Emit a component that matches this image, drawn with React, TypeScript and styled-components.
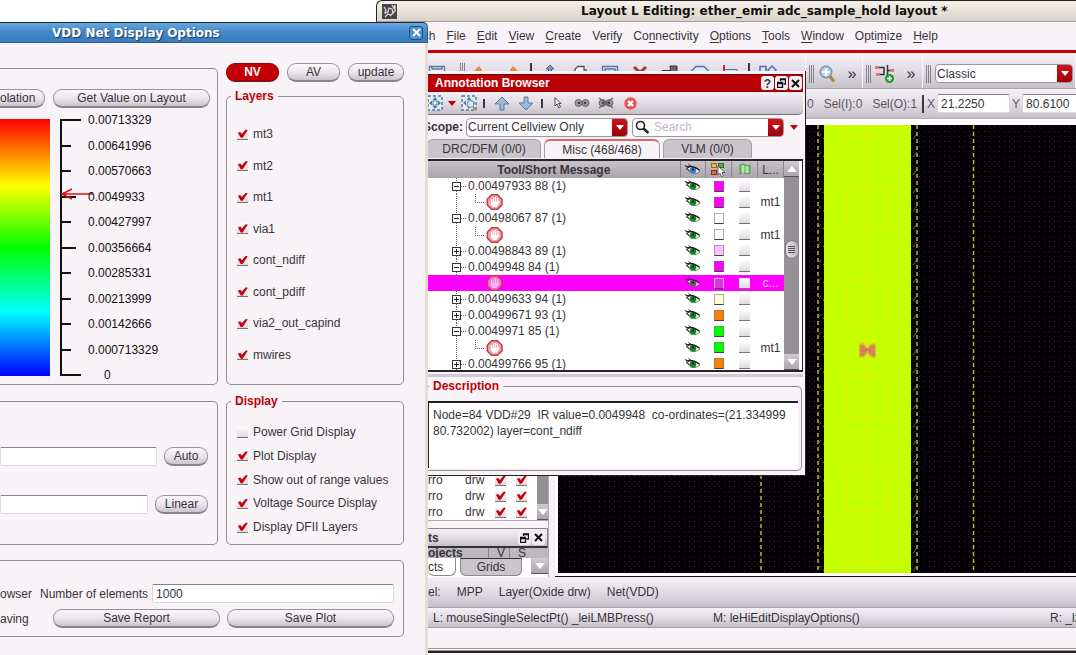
import React from "react";
import styled, { createGlobalStyle, css } from "styled-components";

const GlobalStyle = createGlobalStyle`
  * { box-sizing: border-box; }
  html, body { margin: 0; padding: 0; background: #fff; }
  body, button, input, select, textarea, table, legend {
    font-family: "Liberation Sans", Arial, sans-serif;
    font-size: 12px;
    line-height: 16px;
    color: #37343a;
  }
  button { padding: 0; cursor: default; }
`;

const panel = "#f7f3f7";
const red = "#c00008";
const metal = "linear-gradient(#f5f0f6 0%, #e2dde4 50%, #c6c1c8 100%)";

/* ---------- shared controls ---------- */

const Desktop = styled.main`
  position: relative;
  height: 100vh;
  overflow: hidden;
  background: #fff;
`;

const Pill = styled.button<{ $w?: number; $on?: boolean; $cut?: boolean }>`
  width: ${(p) => (p.$w ? `${p.$w}px` : "auto")};
  height: 19px;
  flex: ${(p) => (p.$w ? "none" : "1")};
  border: 1px solid #98949a;
  border-bottom: 2px solid #868288;
  border-radius: 9px;
  line-height: 15px;
  white-space: nowrap;
  background: linear-gradient(#fbf8fb 0%, #ebe6ed 50%, #cbc6cd 100%);
  ${(p) =>
    p.$on &&
    css`
      background: #c40006;
      border-color: #8e0a10;
      color: #fff;
      font-weight: bold;
    `}
  ${(p) =>
    p.$cut &&
    css`
      border-left: 0;
      border-top-left-radius: 0;
      border-bottom-left-radius: 0;
      text-align: left;
    `}
`;

const TextBox = styled.input<{ $w?: number }>`
  width: ${(p) => (p.$w ? `${p.$w}px` : "auto")};
  flex: ${(p) => (p.$w ? "none" : "1")};
  min-width: 0;
  height: 19px;
  padding: 0 3px;
  border: 1px solid #dcd8dd;
  border-top-color: #858187;
  border-radius: 2px;
  background: #fff;
  outline: none;
`;

const Check = styled.input.attrs({ type: "checkbox" })`
  appearance: none;
  flex: none;
  width: 11px;
  height: 11px;
  margin: 0;
  background: linear-gradient(#fdfbfd, #e0dbe2);
  border-bottom: 1px solid #77737a;
  &:checked::before {
    content: "";
    display: block;
    width: 11px;
    height: 10px;
    background: #c8000c;
    clip-path: polygon(8% 42%, 30% 34%, 44% 54%, 80% 10%, 98% 14%, 52% 92%, 34% 92%);
  }
`;

const Group = styled.fieldset`
  margin: 0;
  min-width: 0;
  border: 1px solid #8f8b91;
  border-radius: 5px;
`;

const Legend = styled.legend`
  margin-left: 4px;
  padding: 0 4px;
  font-weight: bold;
  color: ${red};
`;

/* ---------- option dialog ---------- */

const Dialog = styled.section`
  position: absolute;
  left: 0;
  top: 22px;
  bottom: 0;
  width: 428px;
  display: flex;
  flex-direction: column;
  background: ${panel};
`;

const DialogTitle = styled.header`
  display: flex;
  align-items: center;
  justify-content: space-between;
  height: 21px;
  padding: 0 4px 0 52px;
  border-top: 1px solid #12304e;
  border-bottom: 1px solid #2c5d8d;
  border-right: 1px solid #2c5d8d;
  border-top-right-radius: 5px;
  background: linear-gradient(#6ba5dc, #4389cb 45%, #3a7cbc);
`;

const DialogName = styled.h1`
  margin: 0;
  font: bold 12px/18px "DejaVu Sans", sans-serif;
  color: #fff;
  text-shadow: 1px 1px 1px #1d3d5e;
`;

const CloseBox = styled.button`
  display: grid;
  place-items: center;
  width: 14px;
  height: 14px;
  border: 1px solid #1f5080;
  border-radius: 3px;
  background: #4e90cf;
`;

const DialogBody = styled.div`
  flex: 1;
  display: flex;
  flex-direction: column;
  padding-right: 21px;
  border-right: 3px solid #e4ddd2;
`;

const Columns = styled.div<{ $h: number }>`
  display: grid;
  grid-template-columns: 218px 1fr;
  gap: 8px;
  height: ${(p) => p.$h}px;
`;

const OpenPanel = styled.div<{ $top?: number }>`
  display: flex;
  flex-direction: column;
  min-width: 0;
  margin-top: ${(p) => p.$top ?? 0}px;
  border: 1px solid #8f8b91;
  border-left: 0;
  border-radius: 0 5px 5px 0;
`;

const RightColumn = styled.div`
  display: flex;
  flex-direction: column;
  gap: 6px;
  padding-top: 20px;
  > fieldset { flex: 1; }
`;

const ButtonRow = styled.div`
  display: flex;
  gap: 8px;
`;

const ScaleButtons = styled(ButtonRow)`
  padding: 20px 7px 0 0;
`;

const Scale = styled.div`
  display: flex;
  align-items: flex-start;
  padding-top: 4px;
`;

const Ramp = styled.div`
  width: 50px;
  height: 257px;
  margin: 7px 10px 0 0;
  background: linear-gradient(#f00 0%, #ff0 26%, #0f0 50%, #0ff 75%, #00f 100%);
`;

const Ruler = styled.svg`
  margin-top: 7px;
`;

const ScaleLabels = styled.ol`
  display: flex;
  flex-direction: column;
  justify-content: space-between;
  height: 271px;
  margin: 0 0 0 -6px;
  padding: 0;
  list-style: none;
  color: #111;
  li:last-child { padding-left: 16px; }
`;

const CheckList = styled.div<{ $pt: number; $pb: number }>`
  display: flex;
  flex-direction: column;
  justify-content: space-between;
  height: 100%;
  padding: ${(p) => p.$pt}px 0 ${(p) => p.$pb}px 10px;
`;

const FullGroup = styled(Group)`
  padding: 0;
`;

const OptionGroup = styled(FullGroup)`
  margin-top: 8px;
`;

const CheckLabel = styled.label`
  display: flex;
  align-items: center;
  gap: 5px;
  white-space: nowrap;
`;

const RangeRows = styled.div`
  display: flex;
  flex-direction: column;
  gap: 29px;
  padding: 45px 9px 0 0;
`;

const RangeRow = styled.div`
  display: flex;
  gap: 7px;
`;

const SavePanel = styled(OpenPanel)`
  gap: 6px;
  height: 77px;
  padding: 23px 9px 0 0;
`;

const SaveRow = styled.div<{ $gap: number }>`
  display: flex;
  align-items: center;
  gap: ${(p) => p.$gap}px;
`;

const LeftWord = styled.span<{ $w: number }>`
  width: ${(p) => p.$w}px;
  flex: none;
`;

/* ---------- layout editor window ---------- */

const Editor = styled.section`
  display: flex;
  flex-direction: column;
  height: calc(100vh - 2px);
  margin-left: 376px;
  overflow: hidden;
  background: ${panel};
  border-bottom: 2px solid #222;
`;

const EditorTitle = styled.header`
  flex: none;
  display: flex;
  align-items: center;
  gap: 184px;
  height: 22px;
  padding-left: 5px;
  border-top: 1px solid #222;
  border-left: 1px solid #222;
  border-bottom: 1px solid #a39d93;
  border-top-left-radius: 6px;
  background: linear-gradient(#f5f1ea, #d9d3c8);
`;

const EditorName = styled.h1`
  margin: 0;
  font: bold 12px/18px "DejaVu Sans", sans-serif;
  color: #111;
  white-space: nowrap;
`;

const MenuBar = styled.nav`
  flex: none;
  display: flex;
  gap: 11px;
  height: 31px;
  padding: 5px 0 0 20px;
  border-bottom: 3px solid #c80009;
`;

const MenuItem = styled.button`
  height: 18px;
  border: 0;
  background: none;
  u { text-underline-offset: 2px; }
`;

const ToolBar = styled.div`
  flex: none;
  display: flex;
  height: 36px;
  border-bottom: 1px solid #a9a4ab;
`;

const ToolGroup = styled.div<{ $w?: number }>`
  display: flex;
  align-items: center;
  flex: ${(p) => (p.$w ? "none" : "1")};
  width: ${(p) => (p.$w ? `${p.$w}px` : "auto")};
  padding: 6px 0 0 3px;
  gap: 4px;
  border-right: 1px solid #f8f6f9;
  background: ${metal};
`;

const IconStrip = styled(ToolGroup)`
  align-items: flex-start;
  padding: 10px 0 0 46px;
  gap: 0;
`;

const ToolButton = styled.button<{ $w: number }>`
  display: grid;
  place-items: center;
  flex: none;
  width: ${(p) => p.$w}px;
  height: 20px;
  border: 0;
  background: none;
`;

const MoreButton = styled(ToolButton)`
  font-size: 16px;
`;

const Grip = styled.span`
  flex: none;
  width: 5px;
  height: 18px;
  border: solid #858187;
  border-width: 0 1px;
  background: linear-gradient(90deg, transparent 1px, #858187 1px 2px, transparent 2px);
`;

const StripGrip = styled(Grip)`
  margin: 0 2px 0 8px;
`;

const Divider = styled.span<{ $h: number }>`
  flex: none;
  width: 2px;
  height: ${(p) => p.$h}px;
  margin: 0 3px;
  background: #3b383d;
`;

const ToolDivider = styled(Divider)`
  margin: 0 5px;
`;

const Combo = styled.span<{ $w: number }>`
  display: flex;
  flex: none;
  width: ${(p) => p.$w}px;
  height: 19px;
  border: 1px solid #9b979d;
  border-radius: 4px;
  background: #fff;
  overflow: hidden;
`;

const Select = styled.select`
  appearance: none;
  flex: 1;
  min-width: 0;
  padding: 0 0 0 1px;
  border: 0;
  background: transparent;
`;

const Drop = styled.span`
  display: grid;
  place-items: center;
  flex: none;
  width: 15px;
  background: linear-gradient(#d0121a, #9c0007);
`;

const CoordBar = styled.div`
  flex: none;
  display: flex;
  align-items: center;
  height: 30px;
  padding-left: 431px;
  border-bottom: 1px solid #b5b0b7;
  background: ${metal};
  white-space: nowrap;
`;

const CoordTexts = styled.div`
  display: flex;
  flex: none;
  gap: 10px;
  margin-right: 2px;
  color: #5a565c;
`;

const CoordLabel = styled.label`
  display: flex;
  align-items: center;
  gap: 2px;
  flex: none;
  margin-right: 2px;
  color: #5a565c;
`;

const Work = styled.div`
  flex: 1;
  display: flex;
  min-height: 0;
  background: ${panel};
`;

const Dock = styled.aside`
  display: flex;
  flex-direction: column;
  justify-content: flex-end;
  flex: none;
  width: 173px;
  padding-left: 52px;
  border-right: 1px solid #b0abb2;
  overflow: hidden;
`;

const CanvasFrame = styled.div`
  flex: 1;
  min-width: 0;
  margin-left: 6px;
  padding: 6px 0 3px 3px;
  background: #fff;
  border-bottom: 1px solid #111;
`;

const LayerPane = styled.div`
  display: flex;
  background: #fff;
  border-bottom: 1px solid #b0abb2;
`;

const LayerTable = styled.table`
  width: 103px;
  height: 48px;
  table-layout: fixed;
  border-collapse: collapse;
  td { height: 16px; padding: 0; line-height: 16px; }
  td:nth-child(1) { width: 37px; }
  td:nth-child(2) { width: 30px; }
  td:nth-child(n + 3) { width: 21px; }
  input { display: block; }
`;

const ScrollTrack = styled.div<{ $w: number }>`
  display: flex;
  flex-direction: column;
  justify-content: space-between;
  align-items: center;
  width: ${(p) => p.$w}px;
  background: #949196;
`;

const ScrollButton = styled.button`
  display: grid;
  place-items: center;
  width: 100%;
  height: 16px;
  border: 0;
  border-bottom: 1px solid #55525a;
  background: linear-gradient(#cfcbd1, #aaa6ac);
`;

const Thumb = styled.span`
  display: grid;
  place-items: center;
  width: 14px;
  height: 19px;
  border: 1px solid #77747a;
  border-radius: 7px;
  background: linear-gradient(90deg, #e3e0e4, #b9b5bb);
`;

const ObjectsTitle = styled.div`
  display: flex;
  align-items: center;
  gap: 1px;
  height: 20px;
  margin-top: 7px;
  padding-right: 2px;
  border: solid #8b878d;
  border-width: 1px 1px 0 0;
  border-bottom: 2px solid #333;
  background: ${metal};
  font-weight: bold;
`;

const Grow = styled.span<{ $n?: number }>`
  flex: ${(p) => p.$n ?? 1};
`;

const SmallBox = styled.button`
  display: grid;
  place-items: center;
  width: 13px;
  height: 14px;
  border: 0;
  border-radius: 3px;
  background: #f1edf2;
`;

const ObjectsHead = styled.div`
  display: grid;
  grid-template-columns: 60px 21px 22px 16px;
  height: 10px;
  background: #bcb8be;
  line-height: 10px;
  span { padding-left: 8px; border-left: 1px solid #88848a; }
`;

const DockTabs = styled.div`
  display: flex;
  align-items: flex-start;
  height: 19px;
  background: #fff;
`;

const DockTab = styled.button<{ $w: number; $on?: boolean }>`
  width: ${(p) => p.$w}px;
  height: 18px;
  margin-right: 4px;
  border: 1px solid #8b878d;
  border-top: ${(p) => (p.$on ? "0" : "1px solid #333")};
  border-left: ${(p) => (p.$on ? "0" : "1px solid #8b878d")};
  border-radius: 0 0 6px 6px;
  text-align: ${(p) => (p.$on ? "left" : "center")};
  background: ${(p) => (p.$on ? "#fff" : "#c9c5cb")};
`;

const CursorBar = styled.div`
  flex: none;
  display: flex;
  align-items: center;
  gap: 16px;
  height: 31px;
  padding-left: 52px;
  background: ${metal};
  border-bottom: 1px solid #a39ea5;
  white-space: nowrap;
`;

const MouseBar = styled.div`
  flex: none;
  display: grid;
  grid-template-columns: 280px 337px 1fr;
  height: 20px;
  padding: 2px 0 0 57px;
  background: ${metal};
  border-bottom: 1px solid #a39ea5;
  white-space: nowrap;
`;

const Prompt = styled.div`
  flex: none;
  height: 23px;
  border-bottom: 3px double #9c9890;
`;

/* ---------- annotation browser window ---------- */

const Browser = styled.section`
  position: absolute;
  left: 418px;
  top: 71px;
  width: 388px;
  display: flex;
  flex-direction: column;
  padding: 3px 2px 4px 0;
  background: ${panel};
  border-right: 1px solid #222;
  border-bottom: 1px solid #222;
`;

const BrowserTitle = styled.header`
  display: flex;
  align-items: center;
  gap: 1px;
  height: 18px;
  padding: 0 1px 0 17px;
  background: #bd0005;
  border-top: 1px solid #6e0508;
  border-bottom: 1px solid #8a0509;
  font-weight: bold;
  color: #fff;
`;

const BrowserTools = styled.div`
  display: flex;
  align-items: center;
  height: 23px;
  padding-left: 8px;
  border-bottom: 1px solid #77737a;
  border-radius: 0 0 5px 0;
  background: ${metal};
`;

const ScopeRow = styled.div`
  display: flex;
  align-items: center;
  height: 24px;
  gap: 4px;
  padding: 0 0 0 5px;
`;

const ScopeLabel = styled.label`
  width: 39px;
  text-align: right;
  font-weight: bold;
`;

const SearchBox = styled(Combo)`
  align-items: center;
  padding-left: 2px;
`;

const SearchInput = styled.input`
  flex: 1;
  min-width: 0;
  padding: 0 0 0 4px;
  border: 0;
  outline: none;
  &::placeholder { color: #bdb9bf; opacity: 1; }
`;

const SearchDrop = styled(Drop)`
  align-self: stretch;
`;

const Tabs = styled.div`
  display: flex;
  gap: 3px;
  height: 20px;
  padding-left: 9px;
`;

const Tab = styled.button<{ $w: number; $on?: boolean }>`
  width: ${(p) => p.$w}px;
  height: 19px;
  border: 1px solid #a39fa5;
  border-top: ${(p) => (p.$on ? "2px solid #e0666c" : "1px solid #a39fa5")};
  border-bottom: 0;
  border-radius: 6px 6px 0 0;
  background: ${(p) => (p.$on ? panel : "#c9c5ca")};
`;

const TableFrame = styled.div`
  display: flex;
  height: 213px;
  overflow: hidden;
  padding-right: 3px;
  border: 2px solid #262428;
  border-left: 0;
  border-right-width: 1px;
  background: #fff;
`;

const Messages = styled.table`
  flex: 1;
  min-width: 0;
  height: 211px;
  table-layout: fixed;
  border-collapse: collapse;
  align-self: flex-start;
  th {
    height: 17px;
    padding: 0;
    font-weight: bold;
    line-height: 16px;
    background: linear-gradient(#c6c2c8, #a8a4aa);
    border-right: 1px solid #8c888e;
  }
  th:last-child { font-weight: normal; }
  th:nth-child(1) { width: 264px; padding-left: 10px; }
  th:nth-child(n + 2) { width: 26px; }
  th svg { display: block; margin: 0 auto; }
  td { height: 16px; padding: 0; line-height: 16px; white-space: nowrap; text-align: center; }
  td:first-child { padding-left: 10px; text-align: left; }
  td input, td i { margin: 0 auto; display: block; }
`;

const Row = styled.tr<{ $sel?: boolean }>`
  background: ${(p) => (p.$sel ? "#f0f" : "#fff")};
  color: ${(p) => (p.$sel ? "#fbd0fb" : "inherit")};
`;

const TreeCell = styled.div`
  display: flex;
  height: 16px;
`;

const IconSlot = styled.span<{ $sel?: boolean }>`
  display: flex;
  justify-content: center;
  opacity: ${(p) => (p.$sel ? 0.7 : 1)};
`;

const Swatch = styled.i<{ $c: string; $sel?: boolean }>`
  width: 10px;
  height: 11px;
  background: ${(p) => p.$c};
  border: 1px solid ${(p) => (p.$sel ? "#f0b8f0" : "rgba(120, 110, 120, 0.55)")};
  border-bottom-color: #444;
`;

const Splitter = styled.div`
  height: 3px;
  margin: 2px 0 1px;
  background: #cfcbd1;
`;

const Description = styled(Group)`
  margin: 0 1px 0 0;
  padding: 7px 3px 2px 9px;
  border-left: 0;
`;

const DescLegend = styled(Legend)`
  margin-left: 2px;
`;

const DescText = styled.textarea`
  display: block;
  width: 100%;
  height: 67px;
  padding: 4px 4px;
  border: 0;
  border-top: 2px solid #222;
  border-left: 2px solid #222;
  background: #fff;
  resize: none;
  outline: none;
  overflow: hidden;
`;

/* ---------- drawings ---------- */

const Tri = ({ c = "#fff", s = 8, up = false }: { c?: string; s?: number; up?: boolean }) => (
  <svg width={s} height={s / 2 + 1} viewBox="0 0 8 5">
    <path d={up ? "M0 5L4 0L8 5Z" : "M0 0L4 5L8 0Z"} fill={c} />
  </svg>
);

const Cross = ({ c = "#111" }: { c?: string }) => (
  <svg width="9" height="9" viewBox="0 0 9 9">
    <path d="M1 1L8 8M8 1L1 8" stroke={c} strokeWidth="2" />
  </svg>
);

const Restore = () => (
  <svg width="9" height="10" viewBox="0 0 9 10">
    <path d="M3.500 3V1H8.500V6H6.500M3 1.500H8.500M.5 4.500H5.500V9.500H.5ZM.5 5.500H5.500" fill="none" stroke="#111" strokeWidth="1.300" />
  </svg>
);

const Eye = ({ iris = "#0a8f1c" }: { iris?: string }) => (
  <svg width="16" height="12" viewBox="0 0 16 12">
    <path d="M2 4Q8 1 15 7Q10 11.500 5 8.500Z" fill="#fff" stroke="#777" />
    <circle cx="8" cy="6.300" r="3.300" fill={iris} />
    <circle cx="8" cy="5.600" r="1.100" fill="#113" />
    <path d="M1 3Q8 .8 14.500 6" fill="none" stroke="#222" strokeWidth="1.300" />
    <path d="M0 1.500L4 3.500M1 4.500L4.500 6.500M3.500 .5L6 2.500" fill="none" stroke="#222" />
  </svg>
);

const Branch = ({ open }: { open: boolean }) => (
  <svg width="40" height="16" viewBox="0 0 40 16">
    <path d="M28.500 0V3M28.500 13V16M33 8.500H38" stroke="#666" strokeDasharray="1 1" />
    <rect x="24.500" y="4.500" width="8" height="8" fill="#fff" stroke="#333" />
    <path d={open ? "M26 8.500H31" : "M26 8.500H31M28.500 6V11"} stroke="#222" />
  </svg>
);

const Leaf = () => (
  <svg width="76" height="16" viewBox="0 0 76 16">
    <path d="M28.500 0V16M47.500 0V8M47 8.500H56" stroke="#666" strokeDasharray="1 1" />
    <path d="M63.500 .8h6l4.500 4.500v5.600L69.500 15.300h-6L59.300 11V5.300Z" fill="#eaa5a8" stroke="#c33f47" strokeWidth="1.500" />
    <path d="M63.500 5V9M65.500 3.500V9M67.500 3V9M69.500 4V9M71.300 7.500L69.500 10" stroke="#fff" strokeWidth="1.300" />
    <path d="M62.800 8H70.200V10.500L68.500 13H65L62.800 10.500Z" fill="#fff" />
  </svg>
);

const Fit = ({ lens = false }: { lens?: boolean }) => (
  <svg width="16" height="16" viewBox="0 0 16 16">
    <rect x="1" y="1" width="14" height="14" fill="#e4ecf4" stroke="#557a9e" strokeDasharray="3 2" strokeWidth="1.500" />
    <path d="M8 2l2.500 3h-5ZM8 14l2.500-3h-5ZM2 8l3-2.500v5ZM14 8l-3-2.500v5Z" fill="#4f7aa5" />
    {lens ? (
      <g>
        <path d="M12 12L15 15" stroke="#c98035" strokeWidth="2" />
        <circle cx="9.500" cy="9" r="3.500" fill="#d8e8f6" stroke="#6484a5" />
      </g>
    ) : (
      <rect x="6" y="6" width="4" height="4" fill="#fff" stroke="#4f7aa5" />
    )}
  </svg>
);

const BlueArrow = ({ down = false }: { down?: boolean }) => (
  <svg width="16" height="15" viewBox="0 0 16 15">
    <path d={down ? "M6 1h4v6h5L8 14 1 7h5Z" : "M6 14h4V8h5L8 1 1 8h5Z"} fill="#9dbbd9" stroke="#5b7b9d" />
  </svg>
);

const Glasses = ({ crossed = false }: { crossed?: boolean }) => (
  <svg width="16" height="12" viewBox="0 0 16 12">
    <circle cx="4.500" cy="6" r="3.500" fill="#999" stroke="#666" />
    <circle cx="11.500" cy="6" r="3.500" fill="#999" stroke="#666" />
    <circle cx="5" cy="6" r="1.300" fill="#444" />
    <circle cx="11" cy="6" r="1.300" fill="#444" />
    {crossed && <path d="M1 1L15 11M15 1L1 11" stroke="#666" strokeWidth="1.300" />}
  </svg>
);

const Pointer = () => (
  <svg width="8" height="12" viewBox="0 0 8 12">
    <path d="M1 .5V9L3 7L5 11L6.500 10L4.500 6.500H7Z" fill="#fff" stroke="#333" strokeWidth=".9" />
  </svg>
);

const Delete = () => (
  <svg width="15" height="15" viewBox="0 0 15 15">
    <circle cx="7.500" cy="7.500" r="6.500" fill="#e0545a" stroke="#f3b9bb" />
    <path d="M5 5L10 10M10 5L5 10" stroke="#fff" strokeWidth="2.400" />
  </svg>
);

const Lens = () => (
  <svg width="15" height="15" viewBox="0 0 15 15">
    <circle cx="5.500" cy="5.500" r="4" fill="none" stroke="#222" strokeWidth="1.600" />
    <path d="M8.500 8.500L13.500 13" stroke="#222" strokeWidth="2.400" />
  </svg>
);

const Zoom = () => (
  <svg width="17" height="18" viewBox="0 0 17 18">
    <path d="M10.500 11L15 16.500" stroke="#bd7a33" strokeWidth="3" />
    <circle cx="7" cy="7" r="5.800" fill="#b9d2ea" stroke="#7591ad" strokeWidth="1.400" />
    <path d="M7 3.500V10.500M3.500 7H10.500" stroke="#fff" strokeWidth="2.200" />
  </svg>
);

const NetAdd = () => (
  <svg width="20" height="20" viewBox="0 0 20 20">
    <path d="M1 3.500H9V10.500H3M12.500 1V11M12 6.500H18" fill="none" stroke="#333" strokeWidth="1.500" />
    <path d="M0 2h4v3H0ZM1 9h4v3H1ZM15 5h4v3h-4Z" fill="#e4767a" />
    <circle cx="14.500" cy="14.500" r="4.500" fill="#239a2e" />
    <path d="M14.500 12V17M12 14.500H17" stroke="#fff" strokeWidth="1.500" />
  </svg>
);

const AppMark = () => (
  <svg width="15" height="15" viewBox="0 0 15 15">
    <rect width="15" height="15" fill="#45454a" />
    <path d="M2 3l2 3-1 3 3-1 1-4 3 1 1 4-3 3M3 13l3-3 3 1M10 1l2 3 1-3v6l-2 2" fill="none" stroke="#dcdcdc" strokeWidth="1.300" />
  </svg>
);

const Rgb = () => (
  <svg width="17" height="15" viewBox="0 0 17 15">
    <rect x="1.500" y="1.500" width="5" height="4" fill="#f0b93a" stroke="#a2641b" />
    <rect x="8.500" y="1.500" width="5" height="4" fill="#4fb04f" stroke="#2c6b2c" />
    <rect x="1.500" y="8.500" width="5" height="4" fill="#e26a4c" stroke="#8e2b17" />
    <path d="M8 4v9l2-2 1.500 3.500 1.800-.8L12 10.500h3Z" fill="#fff" stroke="#444" strokeWidth=".8" />
  </svg>
);

const Flag = () => (
  <svg width="12" height="13" viewBox="0 0 12 13">
    <path d="M1 2Q3.500 0 6 2T11 2V10Q8.500 12 6 10T1 11Z" fill="#7fd07a" stroke="#4a8f47" />
    <path d="M4 2V10M8 3V10" stroke="#c9f0c4" strokeWidth="1.500" />
  </svg>
);

const stripIcons: Record<string, React.ReactNode> = {
  "Open": <path d="M1.500 1.500h15v12h-15ZM4 1v3h10V1" fill="#eef2f9" stroke="#5878ad" strokeWidth="1.400" />,
  "Undo": <path d="M1 6L6 1L9 5V9Z" fill="#e2883c" />,
  "Redo": <path d="M15 6L10 1L7 5V9Z" fill="#e2883c" />,
  "Move": <path d="M9 0l4 4h-2.500v3h5v3H2V7h5.500V4H5Z" fill="#7f9dbf" stroke="#49678a" />,
  "Copy": <path d="M4 14V4l3-2.500h6V5h2v8" fill="#fff" stroke="#555" strokeWidth="1.400" />,
  "Stretch": <path d="M1 1.500h16M1.500 1v5M16.500 1v5M4 4h10v8H4Z" fill="#dbe6f5" stroke="#5878ad" strokeWidth="1.400" />,
  "Delete": <path d="M3 2l12 11M15 2L3 13" stroke="#9d3d22" strokeWidth="3" />,
  "Layers": <path d="M1 5.500h8v8H1ZM9 1h7v8h-6Z" fill="#666" stroke="#333" />,
  "Rotate": <path d="M5 1.500h8l4 4v5l-4 4H5l-4-4v-5Z" fill="#dfe9f8" stroke="#4c72b8" strokeWidth="1.500" />,
  "Align": <g><path d="M3 0v14" stroke="#c92a2a" strokeWidth="2" /><path d="M4 4.500h12v4H4" fill="none" stroke="#4c72b8" /></g>,
  "Group": <path d="M1 1.500h6v6H1ZM13 1l4 4-4 4-4-4Z" fill="none" stroke="#4c72b8" strokeWidth="1.500" />,
};

const StripIcon = ({ name }: { name: string }) => (
  <ToolButton $w={30} aria-label={name}>
    <svg width="18" height="16" viewBox="0 0 18 16">{stripIcons[name]}</svg>
  </ToolButton>
);

const contactTops = [-31, 62, 156, 249, 343, 437];

const CanvasArt = styled.svg`
  display: block;
`;

const Canvas = () => (
  <CanvasArt width="100%" height="100%">
    <defs>
      <pattern id="dots" width="10" height="10" patternUnits="userSpaceOnUse">
        <rect width="10" height="10" fill="#030005" />
        <path d="M1 1h1v1h-1ZM6 1h1v1h-1ZM1 6h1v1h-1ZM6 6h1v1h-1Z" fill="#421c30" />
        <path d="M3 3h1v1h-1Z" fill="#1f1760" />
      </pattern>
      <pattern id="hatch" width="6" height="18" patternUnits="userSpaceOnUse">
        <path d="M1 14L5 9" stroke="#6e6e1c" strokeWidth="1" />
      </pattern>
      <filter id="soft"><feGaussianBlur stdDeviation="1.2" /></filter>
    </defs>
    <rect width="100%" height="100%" fill="url(#dots)" />
    <rect x="261" width="5" height="100%" fill="url(#hatch)" />
    <rect x="354" width="5" height="100%" fill="url(#hatch)" />
    <g stroke="#b9b92c" strokeWidth="1.500" strokeDasharray="4 3">
      <line x1="203" x2="203" y1="0" y2="100%" />
      <line x1="260" x2="260" y1="0" y2="100%" />
      <line x1="359" x2="359" y1="0" y2="100%" />
      <line x1="415.500" x2="415.500" y1="0" y2="100%" />
    </g>
    <rect x="266" width="87" height="100%" fill="#c6ff00" />
    <g fill="none" stroke="#f4e400" strokeDasharray="4 3">
      <line x1="309.500" x2="309.500" y1="0" y2="100%" />
      {contactTops.map((y) => (
        <rect key={y} x="288.500" y={y + 0.5} width="42" height="42" />
      ))}
    </g>
    <g filter="url(#soft)">
      <path d="M304 220L315 231M315 220L304 231M303 219V232M316 219V232M304 225.500H315" stroke="#d8755c" strokeWidth="3" />
    </g>
    <line x1="309.500" x2="309.500" y1="219" y2="231" stroke="#ffd83a" strokeDasharray="4 3" />
  </CanvasArt>
);

/* ---------- data ---------- */

const scale = ["0.00713329", "0.00641996", "0.00570663", "0.0049933", "0.00427997", "0.00356664", "0.00285331", "0.00213999", "0.00142666", "0.000713329", "0"];
const tickLengths = [20, 10, 10, 15, 10, 15, 10, 10, 10, 10, 20];

const layers = ["mt3", "mt2", "mt1", "via1", "cont_ndiff", "cont_pdiff", "via2_out_capind", "mwires"];
const display: [string, boolean][] = [
  ["Power Grid Display", false],
  ["Plot Display", true],
  ["Show out of range values", true],
  ["Voltage Source Display", true],
  ["Display DFII Layers", true],
];

const menus: [string, string, string][] = [
  ["", "L", "aunch"], ["", "F", "ile"], ["", "E", "dit"], ["", "V", "iew"], ["", "C", "reate"],
  ["Veri", "f", "y"], ["Co", "n", "nectivity"], ["", "O", "ptions"], ["", "T", "ools"],
  ["", "W", "indow"], ["Opti", "m", "ize"], ["", "H", "elp"],
];

type Message = { text?: string; open?: boolean; color: string; layer?: string; sel?: boolean };
const messages: Message[] = [
  { text: "0.00497933 88 (1)", open: true, color: "#ff00ff" },
  { color: "#ff00ff", layer: "mt1" },
  { text: "0.00498067 87 (1)", open: true, color: "#ffffff" },
  { color: "#ffffff", layer: "mt1" },
  { text: "0.00498843 89 (1)", open: false, color: "#ffbfff" },
  { text: "0.0049948 84 (1)", open: true, color: "#ff00ff" },
  { color: "#d838d8", layer: "c...", sel: true },
  { text: "0.00499633 94 (1)", open: false, color: "#ffffd0" },
  { text: "0.00499671 93 (1)", open: false, color: "#ff8000" },
  { text: "0.0049971 85 (1)", open: true, color: "#00ff00" },
  { color: "#00ff00", layer: "mt1" },
  { text: "0.00499766 95 (1)", open: false, color: "#ff8000" },
];

/* ---------- windows ---------- */

const EditorWindow = () => (
  <Editor>
    <EditorTitle>
      <AppMark />
      <EditorName>Layout L Editing: ether_emir adc_sample_hold layout *</EditorName>
    </EditorTitle>
    <MenuBar>
      {menus.map(([a, b, c]) => (
        <MenuItem key={a + b + c}>{a}<u>{b}</u>{c}</MenuItem>
      ))}
    </MenuBar>
    <ToolBar>
      <IconStrip $w={430}>
        <StripIcon name="Open" />
        <StripGrip />
        <StripIcon name="Undo" />
        <StripIcon name="Redo" />
        <Divider $h={18} />
        {["Move", "Copy", "Stretch", "Delete", "Layers", "Rotate", "Align"].map((n) => (
          <StripIcon key={n} name={n} />
        ))}
        <Divider $h={18} />
        <StripIcon name="Group" />
      </IconStrip>
      <ToolGroup $w={57}>
        <Grip />
        <ToolButton $w={18} aria-label="Zoom"><Zoom /></ToolButton>
        <MoreButton $w={24} aria-label="More view tools">»</MoreButton>
      </ToolGroup>
      <ToolGroup $w={60}>
        <Grip />
        <ToolButton $w={20} aria-label="Create net"><NetAdd /></ToolButton>
        <MoreButton $w={24} aria-label="More create tools">»</MoreButton>
      </ToolGroup>
      <ToolGroup>
        <Grip />
        <Combo $w={138}>
          <Select aria-label="Workspace" defaultValue="Classic"><option>Classic</option></Select>
          <Drop><Tri /></Drop>
        </Combo>
      </ToolGroup>
    </ToolBar>
    <CoordBar>
      <CoordTexts>
        <span>0</span><span>Sel(I):0</span><span>Sel(O):1</span>
      </CoordTexts>
      <Divider $h={18} />
      <CoordLabel>X<TextBox $w={73} defaultValue="21.2250" /></CoordLabel>
      <CoordLabel>Y<TextBox $w={73} defaultValue="80.6100" /></CoordLabel>
    </CoordBar>
    <Work>
      <Dock>
        <LayerPane>
          <LayerTable>
            <tbody>
              {[0, 1, 2].map((i) => (
                <tr key={i}>
                  <td>rro</td>
                  <td>drw</td>
                  <td><Check defaultChecked aria-label="Visible" /></td>
                  <td><Check defaultChecked aria-label="Selectable" /></td>
                </tr>
              ))}
            </tbody>
          </LayerTable>
          <ScrollTrack $w={15}>
            <span />
            <ScrollButton aria-label="Scroll down"><Tri s={10} /></ScrollButton>
          </ScrollTrack>
        </LayerPane>
        <ObjectsTitle>
          ts<Grow />
          <SmallBox aria-label="Float"><Restore /></SmallBox>
          <SmallBox aria-label="Close"><Cross /></SmallBox>
        </ObjectsTitle>
        <ObjectsHead><b>ojects</b><span>V</span><span>S</span></ObjectsHead>
        <DockTabs>
          <DockTab $w={28} $on>cts</DockTab>
          <DockTab $w={62}>Grids</DockTab>
          <Grow />
          <ScrollTrack $w={17}>
            <ScrollButton aria-label="Scroll objects"><Tri s={10} /></ScrollButton>
          </ScrollTrack>
        </DockTabs>
      </Dock>
      <CanvasFrame><Canvas /></CanvasFrame>
    </Work>
    <CursorBar>
      <span>el:</span><span>MPP</span><span>Layer(Oxide drw)</span><span>Net(VDD)</span>
    </CursorBar>
    <MouseBar>
      <span>L: mouseSingleSelectPt() _leiLMBPress()</span>
      <span>M: leHiEditDisplayOptions()</span>
      <span>R: _lz</span>
    </MouseBar>
    <Prompt />
  </Editor>
);

const BrowserWindow = () => (
  <Browser>
    <BrowserTitle>
      Annotation Browser<Grow />
      <SmallBox aria-label="Help"><b>?</b></SmallBox>
      <SmallBox aria-label="Float"><Restore /></SmallBox>
      <SmallBox aria-label="Close"><Cross /></SmallBox>
    </BrowserTitle>
    <BrowserTools>
      <ToolButton $w={18} aria-label="Fit"><Fit /></ToolButton>
      <ToolButton $w={16} aria-label="Fit options"><Tri c={red} /></ToolButton>
      <ToolButton $w={18} aria-label="Zoom to"><Fit lens /></ToolButton>
      <ToolDivider $h={9} />
      <ToolButton $w={24} aria-label="Previous"><BlueArrow /></ToolButton>
      <ToolButton $w={24} aria-label="Next"><BlueArrow down /></ToolButton>
      <Divider $h={9} />
      <ToolButton $w={24} aria-label="Select"><Pointer /></ToolButton>
      <ToolButton $w={24} aria-label="Show all"><Glasses /></ToolButton>
      <ToolButton $w={24} aria-label="Hide all"><Glasses crossed /></ToolButton>
      <ToolButton $w={24} aria-label="Delete"><Delete /></ToolButton>
    </BrowserTools>
    <ScopeRow>
      <ScopeLabel htmlFor="scope">Scope:</ScopeLabel>
      <Combo $w={162}>
        <Select id="scope" defaultValue="Current Cellview Only"><option>Current Cellview Only</option></Select>
        <Drop><Tri /></Drop>
      </Combo>
      <SearchBox $w={152}>
        <Lens />
        <SearchInput placeholder="Search" aria-label="Search" />
        <SearchDrop><Tri /></SearchDrop>
      </SearchBox>
      <ToolButton $w={12} aria-label="Search options"><Tri c={red} /></ToolButton>
    </ScopeRow>
    <Tabs role="tablist">
      <Tab $w={114} role="tab">DRC/DFM (0/0)</Tab>
      <Tab $w={116} $on role="tab" aria-selected>Misc (468/468)</Tab>
      <Tab $w={89} role="tab">VLM (0/0)</Tab>
    </Tabs>
    <TableFrame>
      <Messages>
        <thead>
          <tr>
            <th>Tool/Short Message</th>
            <th><Eye iris="#3f7fd0" /></th>
            <th><Rgb /></th>
            <th><Flag /></th>
            <th>L...</th>
          </tr>
        </thead>
        <tbody>
          {messages.map((m, i) => (
            <Row key={i} $sel={m.sel}>
              <td>
                <TreeCell>
                  {m.text ? <Branch open={!!m.open} /> : <IconSlot $sel={m.sel}><Leaf /></IconSlot>}
                  {m.text}
                </TreeCell>
              </td>
              <td><IconSlot $sel={m.sel}><Eye /></IconSlot></td>
              <td><Swatch $c={m.color} $sel={m.sel} /></td>
              <td><Check aria-label="Reviewed" /></td>
              <td>{m.layer}</td>
            </Row>
          ))}
        </tbody>
      </Messages>
      <ScrollTrack $w={15}>
        <ScrollButton aria-label="Scroll up"><Tri s={10} up /></ScrollButton>
        <Grow $n={2} />
        <Thumb>
          <svg width="7" height="8" viewBox="0 0 7 8"><path d="M0 .5H7M0 2.500H7M0 4.500H7M0 6.500H7" stroke="#555" /></svg>
        </Thumb>
        <Grow $n={3} />
        <ScrollButton aria-label="Scroll down"><Tri s={10} /></ScrollButton>
      </ScrollTrack>
    </TableFrame>
    <Splitter />
    <Description>
      <DescLegend>Description</DescLegend>
      <DescText
        readOnly
        aria-label="Description"
        value={"Node=84 VDD#29  IR value=0.0049948  co-ordinates=(21.334999\n80.732002) layer=cont_ndiff"}
      />
    </Description>
  </Browser>
);

const OptionsDialog = () => (
  <Dialog>
    <DialogTitle>
      <DialogName>VDD Net Display Options</DialogName>
      <CloseBox aria-label="Close"><Cross c="#fff" /></CloseBox>
    </DialogTitle>
    <DialogBody>
      <Columns $h={342}>
        <OpenPanel $top={25}>
          <ScaleButtons>
            <Pill $w={45} $cut>olation</Pill>
            <Pill>Get Value on Layout</Pill>
          </ScaleButtons>
          <Scale>
            <Ramp />
            <Ruler width="34" height="257" viewBox="0 0 34 257">
              <path
                d={"M1 0V257" + tickLengths.map((w, i) => `M0 ${Math.round(1 + i * 25.5)}h${w + 1}`).join("")}
                stroke="#111"
                strokeWidth="2"
              />
              <path d="M33 75H3M12 70L2 75L12 80" fill="none" stroke="#e80c0c" strokeWidth="1.500" />
            </Ruler>
            <ScaleLabels>
              {scale.map((s) => <li key={s}>{s}</li>)}
            </ScaleLabels>
          </Scale>
        </OpenPanel>
        <RightColumn>
          <ButtonRow>
            <Pill $w={53} $on>NV</Pill>
            <Pill $w={53}>AV</Pill>
            <Pill $w={56}>update</Pill>
          </ButtonRow>
          <FullGroup>
            <Legend>Layers</Legend>
            <CheckList $pt={22} $pb={21}>
              {layers.map((l) => (
                <CheckLabel key={l}><Check defaultChecked />{l}</CheckLabel>
              ))}
            </CheckList>
          </FullGroup>
        </RightColumn>
      </Columns>
      <Columns $h={160}>
        <OpenPanel $top={16}>
          <RangeRows>
            <RangeRow><TextBox aria-label="Range" /><Pill $w={44}>Auto</Pill></RangeRow>
            <RangeRow><TextBox aria-label="Steps" /><Pill $w={53}>Linear</Pill></RangeRow>
          </RangeRows>
        </OpenPanel>
        <OptionGroup>
          <Legend>Display</Legend>
          <CheckList $pt={15} $pb={9}>
            {display.map(([l, on]) => (
              <CheckLabel key={l}><Check defaultChecked={on} />{l}</CheckLabel>
            ))}
          </CheckList>
        </OptionGroup>
      </Columns>
      <SavePanel $top={15}>
        <SaveRow $gap={4}>
          <LeftWord $w={36}>owser</LeftWord>
          <label htmlFor="count">Number of elements</label>
          <TextBox id="count" defaultValue="1000" />
        </SaveRow>
        <SaveRow $gap={7}>
          <LeftWord $w={46}>aving</LeftWord>
          <Pill>Save Report</Pill>
          <Pill>Save Plot</Pill>
        </SaveRow>
      </SavePanel>
    </DialogBody>
  </Dialog>
);

export default function App() {
  return (
    <>
      <GlobalStyle />
      <Desktop>
        <EditorWindow />
        <BrowserWindow />
        <OptionsDialog />
      </Desktop>
    </>
  );
}
